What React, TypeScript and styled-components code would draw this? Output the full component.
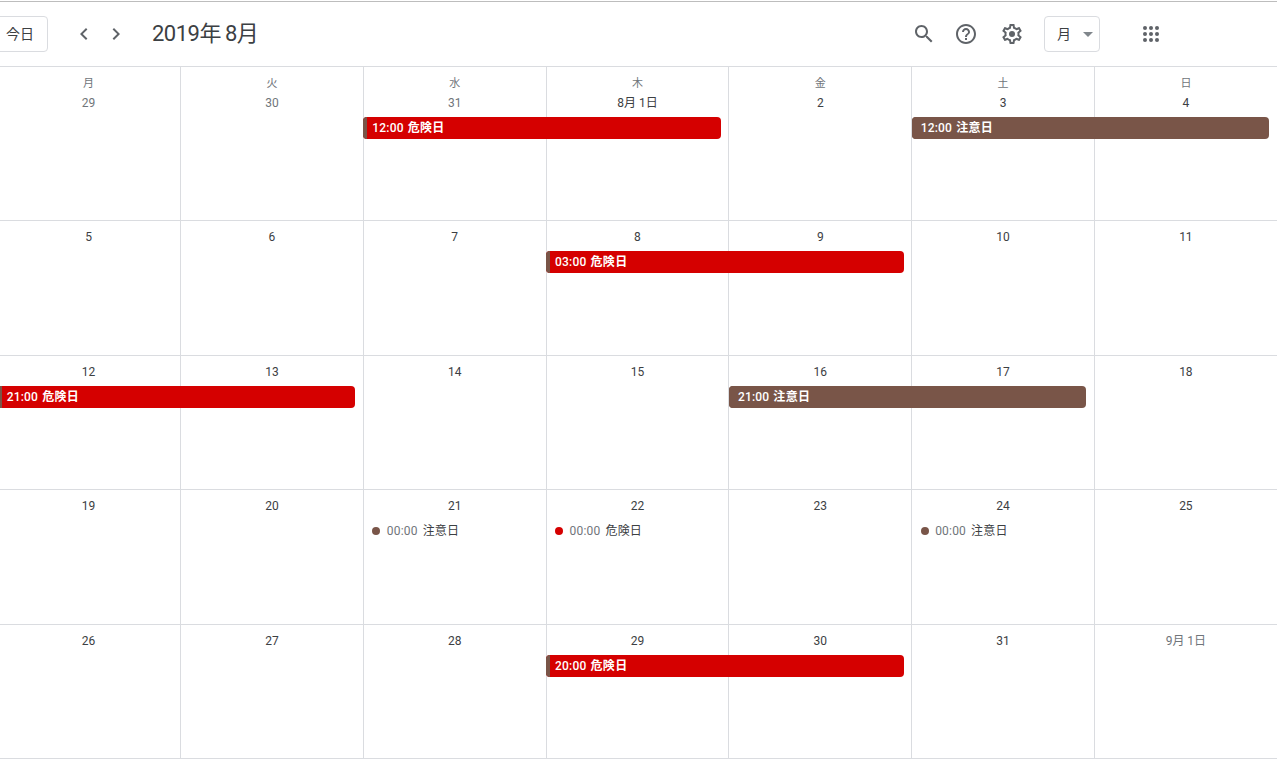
import React from 'react';
import styled, { createGlobalStyle } from 'styled-components';

type Tone = 'danger' | 'caution';

interface DayInfo {
  label: string;
  muted?: boolean;
}

interface SpanEvent {
  start: number;
  span: number;
  time: string;
  title: string;
  tone: Tone;
}

interface DotEvent {
  start: number;
  time: string;
  title: string;
  tone: Tone;
}

interface WeekInfo {
  days: DayInfo[];
  spans?: SpanEvent[];
  dots?: DotEvent[];
}

const COLOR = {
  LINE: '#dadce0',
  TEXT: '#3c4043',
  MUTED: '#70757a',
  ICON: '#5f6368',
  danger: '#d50000',
  caution: '#795548',
};

const DOW = ['月', '火', '水', '木', '金', '土', '日'];

const numbers = (from: number, to: number): DayInfo[] =>
  Array.from({ length: to - from + 1 }, (_, i) => ({ label: `${from + i}` }));

const WEEKS: WeekInfo[] = [
  {
    days: [
      { label: '29', muted: true },
      { label: '30', muted: true },
      { label: '31', muted: true },
      { label: '8月 1日' },
      ...numbers(2, 4),
    ],
    spans: [
      { start: 3, span: 2, time: '12:00', title: '危険日', tone: 'danger' },
      { start: 6, span: 2, time: '12:00', title: '注意日', tone: 'caution' },
    ],
  },
  {
    days: numbers(5, 11),
    spans: [{ start: 4, span: 2, time: '03:00', title: '危険日', tone: 'danger' }],
  },
  {
    days: numbers(12, 18),
    spans: [
      { start: 1, span: 2, time: '21:00', title: '危険日', tone: 'danger' },
      { start: 5, span: 2, time: '21:00', title: '注意日', tone: 'caution' },
    ],
  },
  {
    days: numbers(19, 25),
    dots: [
      { start: 3, time: '00:00', title: '注意日', tone: 'caution' },
      { start: 4, time: '00:00', title: '危険日', tone: 'danger' },
      { start: 6, time: '00:00', title: '注意日', tone: 'caution' },
    ],
  },
  {
    days: [...numbers(26, 31), { label: '9月 1日', muted: true }],
    spans: [{ start: 4, span: 2, time: '20:00', title: '危険日', tone: 'danger' }],
  },
];

const APP_DOTS = [6, 12, 18].flatMap(cy => [6, 12, 18].map(cx => ({ cx, cy })));

export default function App() {
  return (
    <Page>
      <GlobalStyle />
      <Toolbar>
        <TodayButton>今日</TodayButton>
        <NavButton aria-label="前へ">
          <svg width="24" height="24" viewBox="0 0 24 24">
            <path d="M15.4 7.4 14 6l-6 6 6 6 1.4-1.4-4.6-4.6z" />
          </svg>
        </NavButton>
        <NavButton aria-label="次へ">
          <svg width="24" height="24" viewBox="0 0 24 24">
            <path d="M10 6 8.6 7.4l4.6 4.6-4.6 4.6L10 18l6-6z" />
          </svg>
        </NavButton>
        <Title>2019年 8月</Title>
        <ToolIcon $gap={0} viewBox="0 0 24 24">
          <path d="M15.5 14h-.79l-.28-.27C15.41 12.59 16 11.11 16 9.5 16 5.91 13.09 3 9.5 3S3 5.91 3 9.5 5.91 16 9.5 16c1.61 0 3.09-.59 4.23-1.57l.27.28v.79l5 4.99L20.49 19l-4.99-5zm-6 0C7.01 14 5 11.99 5 9.5S7.01 5 9.5 5 14 7.01 14 9.5 11.99 14 9.5 14z" />
        </ToolIcon>
        <ToolIcon $gap={18} viewBox="0 0 24 24">
          <path d="M11 18h2v-2h-2v2zm1-16C6.48 2 2 6.48 2 12s4.48 10 10 10 10-4.48 10-10S17.52 2 12 2zm0 18c-4.41 0-8-3.59-8-8s3.59-8 8-8 8 3.59 8 8-3.59 8-8 8zm0-14c-2.21 0-4 1.79-4 4h2c0-1.1.9-2 2-2s2 .9 2 2c0 2-3 1.75-3 5h2c0-2.25 3-2.5 3-5 0-2.21-1.79-4-4-4z" />
        </ToolIcon>
        <ToolIcon $gap={22} viewBox="0 0 24 24">
          <path d="M19.43 12.98c.04-.32.07-.64.07-.98 0-.34-.03-.66-.07-.98l2.11-1.65c.19-.15.24-.42.12-.64l-2-3.46c-.09-.16-.26-.25-.44-.25-.06 0-.12.01-.17.03l-2.49 1c-.52-.4-1.08-.73-1.69-.98l-.38-2.65C14.46 2.18 14.25 2 14 2h-4c-.25 0-.46.18-.49.42l-.38 2.65c-.61.25-1.17.59-1.69.98l-2.49-1c-.06-.02-.12-.03-.18-.03-.17 0-.34.09-.43.25l-2 3.46c-.13.22-.07.49.12.64l2.11 1.65c-.04.32-.07.65-.07.98 0 .33.03.66.07.98l-2.11 1.65c-.19.15-.24.42-.12.64l2 3.46c.09.16.26.25.44.25.06 0 .12-.01.17-.03l2.49-1c.52.4 1.08.73 1.69.98l.38 2.65c.03.24.24.42.49.42h4c.25 0 .46-.18.49-.42l.38-2.65c.61-.25 1.17-.59 1.69-.98l2.49 1c.06.02.12.03.18.03.17 0 .34-.09.43-.25l2-3.46c.12-.22.07-.49-.12-.64l-2.11-1.65zm-1.98-1.71c.04.31.05.52.05.73 0 .21-.02.43-.05.73l-.14 1.13.89.7 1.08.84-.7 1.21-1.27-.51-1.04-.42-.9.68c-.43.32-.84.56-1.25.73l-1.06.43-.16 1.13-.2 1.35h-1.4l-.19-1.35-.16-1.13-1.06-.43c-.43-.18-.83-.41-1.23-.71l-.91-.7-1.06.43-1.27.51-.7-1.21 1.08-.84.89-.7-.14-1.13c-.03-.31-.05-.54-.05-.74s.02-.43.05-.73l.14-1.13-.89-.7-1.08-.84.7-1.21 1.27.51 1.04.42.9-.68c.43-.32.84-.56 1.25-.73l1.06-.43.16-1.13.2-1.35h1.39l.19 1.35.16 1.13 1.06.43c.43.18.83.41 1.23.71l.91.7 1.06-.43 1.27-.51.7 1.21-1.07.85-.89.7.14 1.13z" />
          <circle cx="12" cy="12" r="3" />
        </ToolIcon>
        <ViewSelect>
          <SelectLabel>月</SelectLabel>
          <Caret />
        </ViewSelect>
        <ToolIcon $gap={39} viewBox="0 0 24 24">
          {APP_DOTS.map(dot => (
            <circle key={`${dot.cx}-${dot.cy}`} cx={dot.cx} cy={dot.cy} r="2" />
          ))}
        </ToolIcon>
      </Toolbar>
      <Calendar>
        {WEEKS.map((week, w) => (
          <Week key={`week-${w}`} $first={w === 0}>
            {week.days.map((day, d) => (
              <Day key={`day-${d}`} $col={d + 1}>
                {w === 0 && <DayName>{DOW[d]}</DayName>}
                <DayNumber $muted={day.muted}>{day.label}</DayNumber>
              </Day>
            ))}
            {week.spans?.map(event => (
              <Bar key={event.start} $start={event.start} $span={event.span} $tone={event.tone}>
                <BarTime>{event.time}</BarTime>
                <BarTitle>{event.title}</BarTitle>
                <BarGhost>
                  {event.time} {event.title}
                </BarGhost>
              </Bar>
            ))}
            {week.dots?.map(event => (
              <DotItem key={event.start} $start={event.start}>
                <Dot $tone={event.tone} />
                <DotTime>{event.time}</DotTime>
                <DotTitle>{event.title}</DotTitle>
              </DotItem>
            ))}
          </Week>
        ))}
      </Calendar>
    </Page>
  );
}

const GlobalStyle = createGlobalStyle`
  html, body {
    margin: 0;
    padding: 0;
    background: #ffffff;
    overflow: hidden;
  }
  body {
    font-family: Roboto, "Noto Sans CJK JP", sans-serif;
    color: ${COLOR.TEXT};
  }
  * {
    box-sizing: border-box;
  }
`;

const Page = styled.div`
  width: 1277px;
  height: 759px;
  padding-top: 1px;
  overflow: hidden;
`;

const Toolbar = styled.header`
  display: flex;
  align-items: center;
  height: 65px;
  border-top: 1px solid #bdbdbd;
`;

const TodayButton = styled.button`
  flex: none;
  width: 56px;
  height: 36px;
  margin-left: -8px;
  padding: 0 0 3px;
  border: 1px solid ${COLOR.LINE};
  border-radius: 4px;
  background: #ffffff;
  font-family: inherit;
  font-size: 14px;
  color: ${COLOR.TEXT};
`;

const NavButton = styled.button`
  display: flex;
  align-items: center;
  justify-content: center;
  flex: none;
  width: 32px;
  height: 32px;
  padding: 0;
  border: 0;
  background: none;
  fill: ${COLOR.ICON};
  ${TodayButton} + & {
    margin-left: 20px;
  }
`;

const Title = styled.h1`
  flex: 1;
  margin: 0 0 0 20px;
  font-size: 22px;
  font-weight: 400;
  line-height: 28px;
  letter-spacing: -0.5px;
  word-spacing: -1px;
  color: ${COLOR.TEXT};
`;

const ToolIcon = styled.svg<{ $gap: number }>`
  flex: none;
  width: 24px;
  height: 24px;
  margin-left: ${p => p.$gap}px;
  fill: ${COLOR.ICON};
  &:last-child {
    margin-right: 114px;
  }
`;

const ViewSelect = styled.div`
  display: flex;
  align-items: center;
  flex: none;
  width: 56px;
  height: 36px;
  margin-left: 20px;
  padding-left: 12px;
  border: 1px solid ${COLOR.LINE};
  border-radius: 4px;
  font-size: 14px;
  color: ${COLOR.TEXT};
`;

const SelectLabel = styled.span`
  padding-bottom: 3px;
`;

const Caret = styled.span`
  margin-left: 12px;
  border-top: 5px solid #80868b;
  border-left: 5px solid transparent;
  border-right: 5px solid transparent;
`;

const Calendar = styled.main`
  display: grid;
  grid-template-rows: 154px repeat(4, 134.5px);
  width: 1279.6px;
  margin-left: -2.8px;
  border-bottom: 1px solid ${COLOR.LINE};
`;

const Week = styled.section<{ $first: boolean }>`
  display: grid;
  grid-template-columns: repeat(7, minmax(0, 1fr));
  grid-template-rows: ${p => (p.$first ? 50 : 30)}px 22px 1fr;
  border-top: 1px solid ${COLOR.LINE};
  min-height: 0;
`;

const Day = styled.div<{ $col: number }>`
  grid-row: 1 / 4;
  grid-column: ${p => p.$col};
  padding-top: 6px;
  text-align: center;
  border-left: 1px solid ${COLOR.LINE};
  &:first-child {
    border-left: 0;
  }
`;

const DayName = styled.div`
  margin: 1px 0 -1px;
  font-size: 11px;
  line-height: 20px;
  color: ${COLOR.MUTED};
`;

const DayNumber = styled.div<{ $muted?: boolean }>`
  font-size: 12px;
  font-weight: 400;
  line-height: 20px;
  color: ${p => (p.$muted ? COLOR.MUTED : COLOR.TEXT)};
`;

const Bar = styled.div<{ $start: number; $span: number; $tone: Tone }>`
  position: relative;
  display: flex;
  align-items: center;
  grid-row: 2;
  grid-column: ${p => p.$start} / span ${p => p.$span};
  margin-left: 0.4px;
  margin-right: 7.5px;
  padding-left: 9.1px;
  overflow: hidden;
  border-radius: 4px;
  background: ${p => COLOR[p.$tone]};
  font-size: 12px;
  font-weight: 500;
  line-height: 20px;
  color: #ffffff;
  white-space: nowrap;
  &::before {
    content: '';
    position: absolute;
    top: 0;
    bottom: 0;
    left: 0;
    width: 4px;
    background: ${COLOR.caution};
  }
`;

const BarTime = styled.span`
  margin-right: 4px;
  letter-spacing: 0.2px;
`;

const BarTitle = styled.span`
  font-weight: 700;
  letter-spacing: 0.3px;
`;

const BarGhost = styled.span`
  position: absolute;
  left: 191.4px;
  color: rgba(0, 0, 0, 0.02);
`;

const DotItem = styled.div<{ $start: number }>`
  display: flex;
  align-items: center;
  grid-row: 2;
  grid-column: ${p => p.$start};
  padding-left: 9.4px;
  font-size: 12px;
  font-weight: 400;
  line-height: 20px;
  color: ${COLOR.TEXT};
  white-space: nowrap;
`;

const Dot = styled.span<{ $tone: Tone }>`
  flex: none;
  width: 8px;
  height: 8px;
  margin-right: 6.6px;
  border-radius: 50%;
  background: ${p => COLOR[p.$tone]};
`;

const DotTime = styled.span`
  margin-right: 5px;
  letter-spacing: 0.2px;
  color: ${COLOR.MUTED};
`;

const DotTitle = styled.span`
  letter-spacing: 0.2px;
`;
